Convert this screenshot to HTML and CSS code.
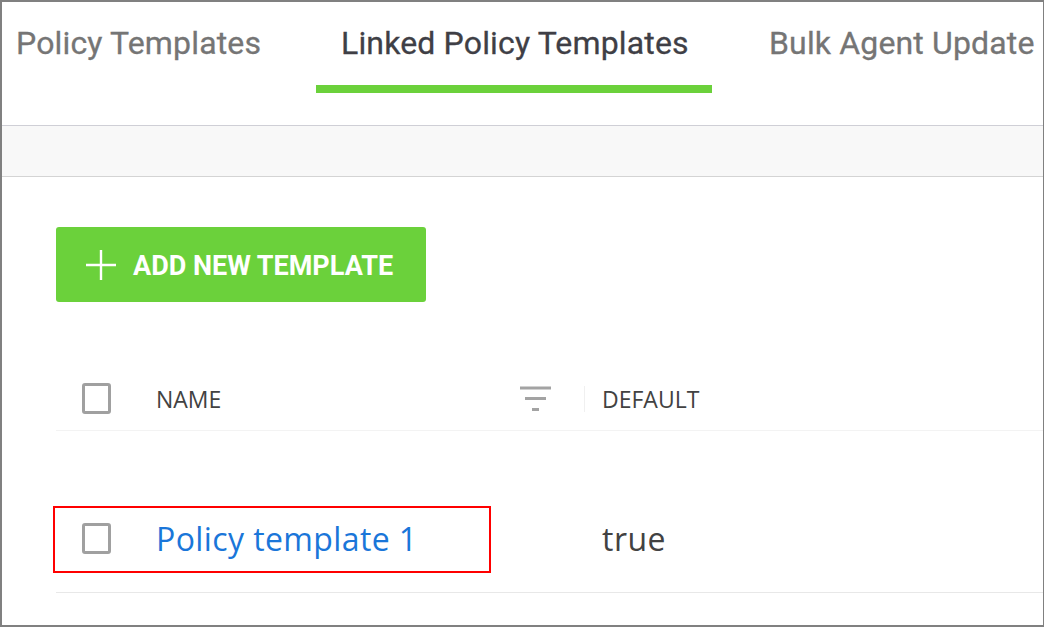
FILE: index.html
```html
<!DOCTYPE html>
<html lang="en">
<head>
  <meta charset="UTF-8">
  <title>Linked Policy Templates</title>
  <link rel="stylesheet" href="styles.css">
</head>
<body>
  <div class="frame">
    <nav class="tabs">
      <a class="tab tab-first">Policy Templates</a>
      <a class="tab tab-active">Linked Policy Templates</a>
      <a class="tab tab-last">Bulk Agent Update</a>
    </nav>
    <div class="band"></div>
    <main class="content">
      <button class="add-btn">
        <svg class="plus" width="30" height="30" viewBox="0 0 30 30">
          <path d="M15 0V30M0 15H30" stroke="#fff" stroke-width="2.4" fill="none"/>
        </svg>
        <span class="add-label">ADD NEW TEMPLATE</span>
      </button>

      <div class="row row-head">
        <span class="check"></span>
        <div class="col-name">
          <span class="head-label">NAME</span>
          <svg class="filter" width="31" height="26" viewBox="0 0 31 26">
            <path d="M0 2H31M5 12.500H26M12 23.500H19" stroke="#a3a3a3" stroke-width="3" fill="none"/>
          </svg>
        </div>
        <span class="divider"></span>
        <span class="head-label">DEFAULT</span>
      </div>

      <div class="row row-body">
        <span class="check"></span>
        <div class="col-name"><a class="link">Policy template 1</a></div>
        <span class="value">true</span>
        <!-- red annotation box -->
        <div class="highlight"></div>
      </div>
    </main>
  </div>
</body>
</html>
```

FILE: styles.css
```css
* {
  box-sizing: border-box;
}
html, body {
  margin: 0;
  height: 100%;
}
body {
  background: #fff;
  overflow: hidden;
}
.frame {
  width: 1044px;
  height: 627px;
  border: 1px solid #808080;
  border-width: 2px 1px 2px 2px;
  overflow: hidden;
}
.tabs {
  display: flex;
  height: 124px;
  border-bottom: 1px solid #cfcfd6;
  white-space: nowrap;
}
.tab {
  font-family: "Roboto", sans-serif;
  font-size: 32px;
  line-height: 38px;
  letter-spacing: 0.15px;
  color: #757575;
  height: 91px;
  padding-top: 22px;
  -webkit-text-stroke: 0.3px currentColor;
}
.tab-first {
  margin-left: 14px;
  width: 300px;
}
.tab-active {
  width: 396px;
  padding-left: 25px;
  color: #3f3f46;
  border-bottom: 8px solid #6bd13b;
}
.tab-last {
  margin-left: 57px;
}
.band {
  height: 51px;
  background: #f8f8f8;
  border-bottom: 1px solid #d4d4d4;
}
.content {
  padding: 50px 0 0 54px;
}
.add-btn {
  display: flex;
  align-items: center;
  width: 370px;
  height: 75px;
  padding: 0 0 0 30px;
  background: #6bd13b;
  border: none;
  border-radius: 3px;
  color: #fff;
  font-family: "Roboto", sans-serif;
  font-size: 27px;
  font-weight: 700;
}
.plus {
  margin-right: 17px;
}
.add-label {
  padding-top: 2px;
}
.row {
  position: relative;
  display: flex;
  align-items: center;
  padding-left: 26px;
}
.row-head {
  height: 64px;
  margin-top: 65px;
  border-bottom: 1px solid #f3f3f3;
}
.row-body {
  height: 162px;
  padding-top: 54px;
  border-bottom: 1px solid #e8e8e8;
}
.check {
  flex: none;
  width: 29px;
  height: 31px;
  border: 3px solid #a0a0a0;
  border-radius: 3px;
}
.col-name {
  display: flex;
  align-items: center;
  justify-content: space-between;
  width: 400px;
  margin-left: 45px;
  padding-right: 5px;
}
.head-label {
  font-family: "Open Sans", sans-serif;
  font-size: 23px;
  color: #424242;
}
.divider {
  width: 1px;
  height: 26px;
  margin: 0 17px 0 28px;
  background: #f0f0f0;
}
.link {
  font-family: "Open Sans", sans-serif;
  font-size: 32px;
  letter-spacing: 0.4px;
  color: #1a76d9;
}
.value {
  margin-left: 46px;
  font-family: "Open Sans", sans-serif;
  font-size: 32px;
  letter-spacing: 0.5px;
  color: #424242;
}
.highlight {
  position: absolute;
  left: -3px;
  top: 75px;
  width: 438px;
  height: 67px;
  border: 2px solid #f00;
}
```
